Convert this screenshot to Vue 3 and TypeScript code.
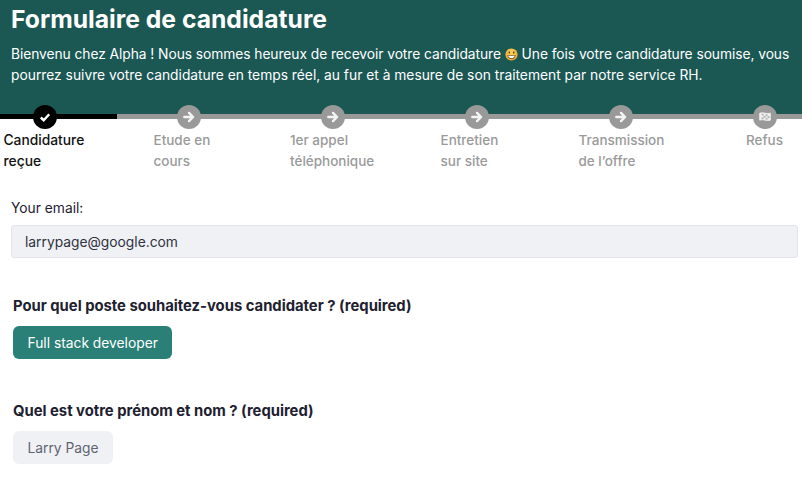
<template>
    <div class="page">
        <!-- En-tête -->
        <header class="hero">
            <h1>Formulaire de candidature</h1>
            <p>
                <span class="tight">
                    Bienvenu chez Alpha ! Nous sommes heureux de recevoir votre candidature
                    <svg class="emoji" viewBox="0 0 16 16" aria-hidden="true">
                        <defs>
                            <radialGradient id="face" cx="50%" cy="35%" r="70%">
                                <stop offset="0" stop-color="#fbd45c" />
                                <stop offset="1" stop-color="#e9a52c" />
                            </radialGradient>
                        </defs>
                        <circle cx="8" cy="8" r="7.500" fill="url(#face)" />
                        <ellipse cx="5.300" cy="5.600" rx="1" ry="1.300" fill="#5b3a16" />
                        <ellipse cx="10.700" cy="5.600" rx="1" ry="1.300" fill="#5b3a16" />
                        <path d="M3 8.600c3.200 .8 6.800 .8 10 0c-.2 3-2.300 4.900-5 4.900s-4.800-1.900-5-4.900z" fill="#5b3a16" />
                        <path d="M3.800 9.300c2.800 .6 5.600 .6 8.400 0c-.3 1.900-2 3.300-4.200 3.300s-3.900-1.400-4.200-3.300z" fill="#fff" />
                    </svg>
                    Une fois votre candidature soumise, vous
                </span>
                <br>pourrez suivre votre candidature en temps réel, au fur et à mesure de son traitement par notre service RH.
            </p>
        </header>

        <!-- Étapes -->
        <ol class="steps">
            <li v-for="step in steps" :key="step.lines[0]" class="step" :class="{ active: step.active }">
                <span class="dot">
                    <svg v-if="step.icon === 'check'" viewBox="0 0 12 12">
                        <path d="M1.800 6.500l2.900 2.700L10.200 3.300" fill="none" stroke="#fff" stroke-width="2.400" />
                    </svg>
                    <svg v-else-if="step.icon === 'arrow'" viewBox="0 0 12 12">
                        <path d="M1.300 6h8.500M6 1.900L10.100 6 6 10.100" fill="none" stroke="#f4f4f4" stroke-width="2.400" stroke-linecap="round" stroke-linejoin="round" />
                    </svg>
                    <svg v-else viewBox="0 0 12 12">
                        <path d="M.6 2.200c3.600-1.400 7.200 1.200 10.800 0v7c-3.600 1.200-7.200-1.400-10.800 0z" fill="#f0f0f0" stroke="#fff" stroke-width=".6" />
                        <path d="M2.600 2.400v1.900l2 .4V2.800zM6.600 3.300v1.900l2 .1V3.400zM4.600 4.700v1.900l2 .3V5.200zM8.600 5.300v1.900l2-.2V5.100zM2.600 6.300v1.900l2 .1V6.600zM6.600 6.900v1.700l2 .2V7.200z" fill="#b5b5b5" />
                    </svg>
                </span>
                <span class="label" :style="{ width: step.width + 'px' }">
                    <template v-for="line in step.lines" :key="line">{{ line }}<br></template>
                </span>
            </li>
        </ol>

        <!-- Formulaire -->
        <form class="form">
            <label for="email">Your email:</label>
            <input id="email" type="text" value="larrypage@google.com" readonly>

            <section class="question first">
                <h2>Pour quel poste souhaitez-vous candidater ? (required)</h2>
                <button type="button" class="choice selected">Full stack developer</button>
            </section>

            <section class="question">
                <h2>Quel est votre prénom et nom ? (required)</h2>
                <button type="button" class="choice">Larry Page</button>
            </section>
        </form>
    </div>
</template>

<script setup lang="ts">
interface Step {
    lines: string[];
    icon: 'check' | 'arrow' | 'flag';
    width: number;
    active?: boolean;
}

const steps: Step[] = [
    { lines: ['Candidature', 'reçue'], icon: 'check', width: 82, active: true },
    { lines: ['Etude en', 'cours'], icon: 'arrow', width: 70 },
    { lines: ['1er appel', 'téléphonique'], icon: 'arrow', width: 85 },
    { lines: ['Entretien', 'sur site'], icon: 'arrow', width: 72 },
    { lines: ['Transmission', 'de l’offre'], icon: 'arrow', width: 84 },
    { lines: ['Refus'], icon: 'flag', width: 37 },
];
</script>

<style>
html,
body {
    background: #fff;
}
</style>

<style scoped>
.page {
    width: 802px;
    height: 500px;
    overflow: hidden;
    font-family: Inter, "Noto Sans", sans-serif;
    color: #1e2130;
}

.hero {
    height: 116px;
    padding: 5px 11px 0;
    box-sizing: border-box;
    background: #1b5854;
    color: #fff;
}

.hero h1 {
    margin: 0;
    font-size: 24.7px;
    line-height: 29px;
    font-weight: 700;
}

.hero p {
    margin: 10px 0 0;
    font-size: 13.8px;
    line-height: 21px;
    white-space: nowrap;
}

.tight {
    letter-spacing: -0.06px;
}

.emoji {
    width: 13px;
    height: 13px;
    vertical-align: -2px;
}

.steps {
    display: flex;
    margin: -11.5px 0 0 -27.5px;
    padding: 0;
    list-style: none;
}

.step {
    flex: 0 0 144px;
    display: flex;
    flex-direction: column;
    align-items: center;
    background: linear-gradient(#999, #999) 0 9.5px / 100% 5px no-repeat;
    color: #9a9a9a;
    font-size: 13.5px;
    font-weight: 500;
    line-height: 21px;
}

.step.active {
    background-image: linear-gradient(#000, #000);
    color: #111;
    font-size: 13.8px;
}

.dot {
    width: 24px;
    height: 24px;
    border-radius: 50%;
    background: #999;
    display: flex;
    align-items: center;
    justify-content: center;
}

.active .dot {
    background: #000;
}

.dot svg {
    width: 12px;
    height: 12px;
}

.label {
    margin-top: 1.5px;
    white-space: nowrap;
}

.form {
    padding: 0 4px 0 11px;
    margin-top: 26px;
}

.form label {
    display: block;
    font-size: 13.8px;
    line-height: 20px;
}

#email {
    display: block;
    width: 100%;
    height: 33px;
    margin-top: 7px;
    padding: 0 13px;
    box-sizing: border-box;
    background: #f0f1f5;
    border: 1px solid #e4e5ea;
    border-radius: 3px;
    font: inherit;
    font-size: 13.8px;
    color: #2f3240;
    outline: none;
}

.question {
    margin: 0 0 0 2px;
    padding-top: 42px;
}

.question.first {
    padding-top: 38px;
}

.question h2 {
    margin: 0 0 10px;
    font-size: 14.8px;
    line-height: 20px;
    font-weight: 700;
}

.choice {
    display: block;
    height: 33px;
    padding: 0 14.5px;
    border: 0;
    border-radius: 6px;
    background: #f0f1f5;
    font: inherit;
    font-size: 13.8px;
    color: #5f6470;
}

.choice.selected {
    background: #2a8077;
    color: #fff;
}
</style>
